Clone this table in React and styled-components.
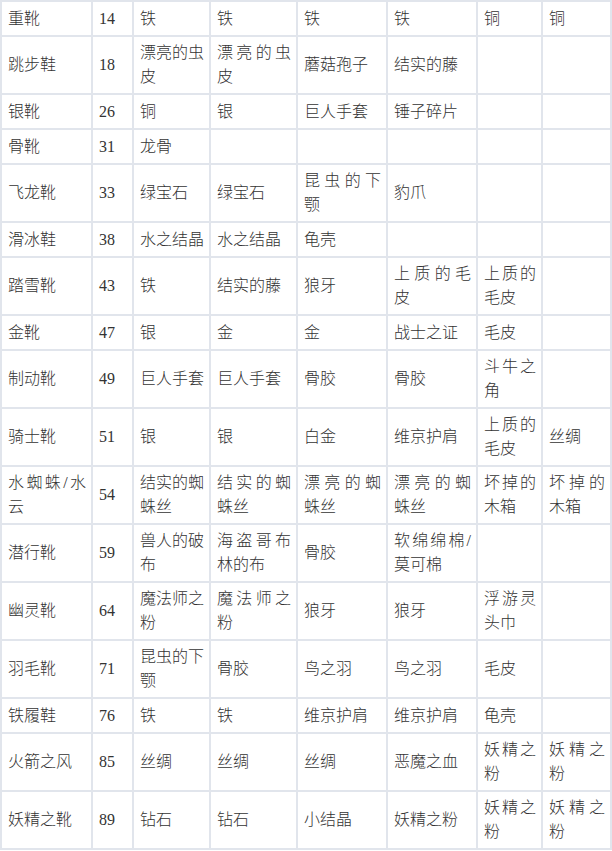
import React from 'react';
import styled, { createGlobalStyle } from 'styled-components';

const GlobalStyle = createGlobalStyle`
  html, body { margin: 0; padding: 0; background: #fff; }
`;

const widths = [91, 41, 77, 87, 90, 90, 65, 69];

// multi-line cells are arrays: every line but the last is spread to full width
const rows = [
  ['重靴', '14', '铁', '铁', '铁', '铁', '铜', '铜'],
  ['跳步鞋', '18', ['漂亮的虫', '皮'], ['漂亮的虫', '皮'], '蘑菇孢子', '结实的藤', '', ''],
  ['银靴', '26', '铜', '银', '巨人手套', '锤子碎片', '', ''],
  ['骨靴', '31', '龙骨', '', '', '', '', ''],
  ['飞龙靴', '33', '绿宝石', '绿宝石', ['昆虫的下', '颚'], '豹爪', '', ''],
  ['滑冰鞋', '38', '水之结晶', '水之结晶', '龟壳', '', '', ''],
  ['踏雪靴', '43', '铁', '结实的藤', '狼牙', ['上质的毛', '皮'], ['上质的', '毛皮'], ''],
  ['金靴', '47', '银', '金', '金', '战士之证', '毛皮', ''],
  ['制动靴', '49', '巨人手套', '巨人手套', '骨胶', '骨胶', ['斗牛之', '角'], ''],
  ['骑士靴', '51', '银', '银', '白金', '维京护肩', ['上质的', '毛皮'], '丝绸'],
  [['水蜘蛛/水', '云'], '54', ['结实的蜘', '蛛丝'], ['结实的蜘', '蛛丝'], ['漂亮的蜘', '蛛丝'], ['漂亮的蜘', '蛛丝'], ['坏掉的', '木箱'], ['坏掉的', '木箱']],
  ['潜行靴', '59', ['兽人的破', '布'], ['海盗哥布', '林的布'], '骨胶', ['软绵绵棉/', '莫可棉'], '', ''],
  ['幽灵靴', '64', ['魔法师之', '粉'], ['魔法师之', '粉'], '狼牙', '狼牙', ['浮游灵', '头巾'], ''],
  ['羽毛靴', '71', ['昆虫的下', '颚'], '骨胶', '鸟之羽', '鸟之羽', '毛皮', ''],
  ['铁履鞋', '76', '铁', '铁', '维京护肩', '维京护肩', '龟壳', ''],
  ['火箭之风', '85', '丝绸', '丝绸', '丝绸', '恶魔之血', ['妖精之', '粉'], ['妖精之', '粉']],
  ['妖精之靴', '89', '钻石', '钻石', '小结晶', '妖精之粉', ['妖精之', '粉'], ['妖精之', '粉']],
];

const Table = styled.table`
  width: 612px;
  border-collapse: collapse;
  table-layout: fixed;
  font-family: "Liberation Serif", "Noto Sans CJK SC", serif;
  font-size: 16px;
  font-weight: 300;
  color: #333;
`;

const Row = styled.tr`
  height: ${p => (p.$tall ? 58 : 35)}px;
`;

const Cell = styled.td`
  border: 2px solid #e1e5ec;
  padding: 0 5px 0 6px;
  vertical-align: middle;
  line-height: 24px;
  overflow: hidden;
  white-space: nowrap;
`;

const Line = styled.span`
  display: block;
  text-align: ${p => (p.$spread ? 'justify' : 'left')};
  text-align-last: ${p => (p.$spread ? 'justify' : 'left')};
`;

function Content({ value }) {
  if (!Array.isArray(value)) return value;
  return value.map((line, i) => (
    <Line key={i} $spread={i < value.length - 1}>{line}</Line>
  ));
}

export default function App() {
  return (
    <>
      <GlobalStyle />
      <Table>
        <colgroup>
          {widths.map((w, i) => <col key={i} style={{ width: w }} />)}
        </colgroup>
        <tbody>
          {rows.map((row, r) => (
            <Row key={r} $tall={row.some(Array.isArray)}>
              {row.map((cell, c) => (
                <Cell key={c}><Content value={cell} /></Cell>
              ))}
            </Row>
          ))}
        </tbody>
      </Table>
    </>
  );
}
